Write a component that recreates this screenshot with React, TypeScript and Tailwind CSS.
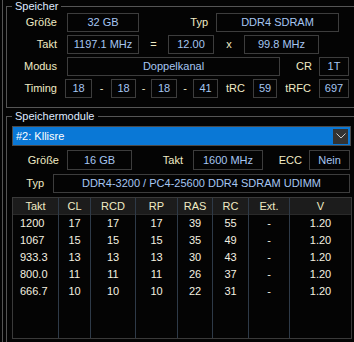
import React from "react";

const font = { fontFamily: '"Liberation Sans", Arial, sans-serif' };

const Box = ({
  className = "",
  children,
}: {
  className?: string;
  children: React.ReactNode;
}) => (
  <div
    className={`flex items-center justify-center border border-[#3d3d3d] text-[#a6c6f2] ${className}`}
  >
    {children}
  </div>
);

const timings = [
  { takt: "1200", cl: 17, rcd: 17, rp: 17, ras: 39, rc: 55 },
  { takt: "1067", cl: 15, rcd: 15, rp: 15, ras: 35, rc: 49 },
  { takt: "933.3", cl: 13, rcd: 13, rp: 13, ras: 30, rc: 43 },
  { takt: "800.0", cl: 11, rcd: 11, rp: 11, ras: 26, rc: 37 },
  { takt: "666.7", cl: 10, rcd: 10, rp: 10, ras: 22, rc: 31 },
];

const columns = [
  { head: "Takt", width: "w-[46px] border-r", key: "takt", left: true },
  { head: "CL", width: "w-[32px] border-r", key: "cl" },
  { head: "RCD", width: "w-[45px] border-r", key: "rcd" },
  { head: "RP", width: "w-[42px] border-r", key: "rp" },
  { head: "RAS", width: "w-[35px] border-r", key: "ras" },
  { head: "RC", width: "w-[36px] border-r", key: "rc" },
  { head: "Ext.", width: "w-[41px] border-r", key: "ext" },
  { head: "V", width: "flex-1", key: "v" },
];

const cellValue = (row: (typeof timings)[number], key: string) => {
  if (key === "ext") return "-";
  if (key === "v") return "1.20";
  return String(row[key as keyof typeof row]);
};

export default function App() {
  return (
    <div
      className="h-[342px] w-[354px] overflow-hidden bg-[#040404] pl-[2px] text-[11px] text-[#f0ebc4]"
      style={font}
    >
      <div className="h-full border-l border-[#555] pl-[3px]">
        {/* Speicher */}
        <fieldset className="w-[354px] border border-[#555] pb-[9px]">
          <legend className="ml-[5px] px-[3px] leading-[13px] text-[#dfe9ff]">
            Speicher
          </legend>
          <div className="flex flex-col gap-[3px]">
            <div className="flex h-[19px] items-center">
              <div className="w-[50px] text-right">Größe</div>
              <Box className="ml-[10px] h-[19px] w-[72px]">32 GB</Box>
              <div className="w-[69px] text-right">Typ</div>
              <Box className="ml-[8px] h-[19px] w-[123px]">DDR4 SDRAM</Box>
            </div>
            <div className="flex h-[19px] items-center">
              <div className="w-[50px] text-right">Takt</div>
              <Box className="ml-[10px] h-[19px] w-[72px]">1197.1 MHz</Box>
              <div className="w-[29px] text-center">=</div>
              <Box className="h-[19px] w-[46px]">12.00</Box>
              <div className="w-[30px] text-center">x</div>
              <Box className="h-[19px] w-[75px]">99.8 MHz</Box>
            </div>
            <div className="flex h-[19px] items-center">
              <div className="w-[50px] text-right">Modus</div>
              <Box className="ml-[10px] h-[19px] w-[213px]">Doppelkanal</Box>
              <div className="w-[39px] pr-[7px] text-right">CR</div>
              <Box className="h-[19px] w-[30px]">1T</Box>
            </div>
            <div className="flex h-[19px] items-center">
              <div className="w-[50px] text-right">Timing</div>
              <Box className="ml-[8px] h-[19px] w-[27px]">18</Box>
              <div className="w-[19px] text-center">-</div>
              <Box className="h-[19px] w-[25px]">18</Box>
              <div className="w-[15px] text-center">-</div>
              <Box className="h-[19px] w-[26px]">18</Box>
              <div className="w-[16px] text-center">-</div>
              <Box className="h-[19px] w-[25px]">41</Box>
              <div className="w-[35px] text-center">tRC</div>
              <Box className="h-[19px] w-[24px]">59</Box>
              <div className="w-[42px] text-center">tRFC</div>
              <Box className="h-[19px] w-[30px]">697</Box>
            </div>
          </div>
        </fieldset>

        {/* Speichermodule */}
        <fieldset className="mt-[2px] h-[260px] w-[354px] border border-[#555]">
          <legend className="ml-[5px] px-[3px] leading-[13px] text-[#dfe9ff]">
            Speichermodule
          </legend>
          <div className="ml-[5px] mt-[3px] flex h-[20px] w-[339px] items-center border border-[#4a4a4a] bg-[#0a78d6] pr-[2px] text-white">
            <span className="flex-1 pl-[3px]">#2: Kllisre</span>
            <div className="flex h-[15px] w-[15px] items-center justify-center bg-[#333]">
              <svg width="10" height="6" viewBox="0 0 10 6">
                <polyline
                  points="0.5,0.5 5,5 9.5,0.5"
                  fill="none"
                  stroke="#c8c8c8"
                  strokeWidth="1"
                />
              </svg>
            </div>
          </div>

          <div className="mt-[4px] flex h-[20px] items-center">
            <div className="w-[52px] text-right">Größe</div>
            <Box className="ml-[8px] h-[20px] w-[65px]">16 GB</Box>
            <div className="w-[61px] pr-[10px] text-right">Takt</div>
            <Box className="h-[20px] w-[70px]">1600 MHz</Box>
            <div className="w-[46px] pr-[7px] text-right">ECC</div>
            <Box className="h-[20px] w-[41px]">Nein</Box>
          </div>

          <div className="mt-[4px] flex h-[19px] items-center">
            <div className="w-[37px] text-right">Typ</div>
            <Box className="ml-[9px] h-[19px] w-[297px]">
              DDR4-3200 / PC4-25600 DDR4 SDRAM UDIMM
            </Box>
          </div>

          {/* Timing table */}
          <div className="ml-[5px] mt-[4px] flex h-[142px] w-[340px] border border-[#3a3a3a]">
            {columns.map((col) => (
              <div
                key={col.key}
                className={`flex flex-col border-[#2e3a48] ${col.width}`}
              >
                <div className="flex h-[17px] items-center justify-center border-b border-[#2a2a2a] bg-[#1c1c1c]">
                  {col.head}
                </div>
                {timings.map((row) => (
                  <div
                    key={row.takt}
                    className={`flex h-[17px] items-center text-[#f4f1e0] ${
                      col.left ? "pl-[7px]" : "justify-center"
                    }`}
                  >
                    {cellValue(row, col.key)}
                  </div>
                ))}
              </div>
            ))}
          </div>
        </fieldset>
      </div>
    </div>
  );
}
